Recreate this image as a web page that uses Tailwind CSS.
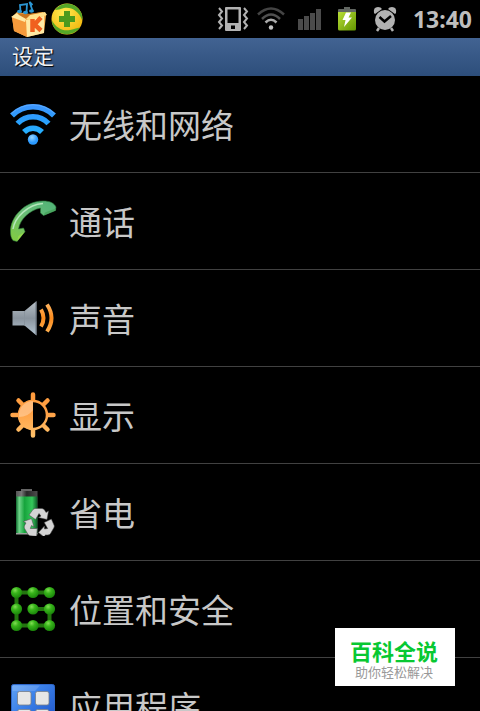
<!DOCTYPE html>
<html lang="zh-CN">
<head>
<meta charset="utf-8">
<meta name="viewport" content="width=device-width, initial-scale=1">
<title>设定</title>
<script src="https://cdn.jsdelivr.net/npm/@tailwindcss/browser@4"></script>
</head>
<body class="relative h-screen overflow-hidden bg-black font-['Noto_Sans','Noto_Sans_CJK_SC',sans-serif] text-[#c8c8c8]">

<!-- Status bar -->
<div class="flex h-[38px] items-center justify-between pr-2 pl-[10px]">
  <div class="flex items-center gap-[3px]">
    <svg class="h-[38px] w-[38px]" viewBox="0 0 38 38" aria-hidden="true">
      <path d="M2 17 7 12 20 14 33 12 36 15 34 33 17 37 4 31Z" fill="#f9b04c"/>
      <path d="M2 17 16 20 17 37 4 31Z" fill="#f59a3c"/>
      <path d="M16 20 34 16 34 33 17 37Z" fill="#ffeaa6"/>
      <path d="M7 13 18 14 33 12 16 19 5 16Z" fill="#c9731c"/>
      <path d="M1 17 7 13 9 15 16 19 15 22Z" fill="#ffe9a4"/>
      <path d="M16 19 20 15 35 12 37 15 20 20Z" fill="#ffe08a"/>
      <path d="M22.500 19V32M31 17.500 24.500 24.500 31 30.500" fill="none" stroke="#f0601f" stroke-width="4.500"/>
      <path d="M10.500 11.500 10 5 17 4 16.500 12M22.500 10.500 19.500 2 22.500 5" fill="none" stroke="#2b96d3" stroke-width="1.800"/>
      <g fill="#2b96d3"><ellipse cx="9.500" cy="11.500" rx="2.500" ry="1.800"/><ellipse cx="15.500" cy="12.500" rx="2.500" ry="1.800"/><ellipse cx="21.500" cy="11" rx="2.500" ry="1.800"/></g>
    </svg>
    <svg class="h-8 w-8" viewBox="0 0 32 32" aria-hidden="true">
      <defs>
        <radialGradient id="orb" cx=".4" cy=".3" r=".75"><stop offset="0" stop-color="#ffec50"/><stop offset="1" stop-color="#f2b50c"/></radialGradient>
      </defs>
      <circle cx="16" cy="16" r="15.500" fill="url(#orb)"/>
      <path d="M4 7C9 0 19-1 25 3.500 30 7.500 32 12 31 17 28 8 20 3.500 13 5 9 6 7 7 4 7Z" fill="#55a728"/>
      <path d="M29 24.500C24 32 13 33 7 28.500 3 25.500 1 22 1 17.500 5 25 12 28.500 19 27 24 26 26 25 29 24.500Z" fill="#55a728"/>
      <path d="M13 8H19V13H24V19H19V24H13V19H8V13H13Z" fill="#4c9a1d"/>
    </svg>
  </div>
  <div class="flex items-center">
    <svg class="mr-2 h-6 w-8" viewBox="0 0 32 24" role="img" aria-label="振动">
      <path fill-rule="evenodd" d="M9 0H23Q24 0 24 1V23Q24 24 23 24H9Q8 24 8 23V1Q8 0 9 0ZM10.500 2.500V16H21.500V2.500ZM14 18.500V22H18V18.500Z" fill="#b2b2b2"/>
      <path d="M2 1 5 4.500 2 8 5 11.500 2 15 5 18.500 2 22M27 1 30 4.500 27 8 30 11.500 27 15 30 18.500 27 22" fill="none" stroke="#b2b2b2" stroke-width="2"/>
    </svg>
    <svg class="mr-3 h-6 w-7" viewBox="0 0 28 24" role="img" aria-label="无线网络">
      <g fill="none" stroke-width="2.500">
        <path d="M1 7.500Q14-4.500 27 7.500" stroke="#444"/>
        <path d="M5 12Q14 3 23 12" stroke="#505050"/>
        <path d="M8.500 15.500Q14 10 19.500 15.500" stroke="#aaa"/>
      </g>
      <circle cx="14" cy="20.500" r="2.200" fill="#c4c4c4"/>
    </svg>
    <svg class="mr-4 h-6 w-6" viewBox="0 0 24 24" fill="#4b4b4b" role="img" aria-label="信号">
      <path d="M1 12H6V23H1ZM7 9H12V23H7ZM13 6H18V23H13ZM19 2H24V23H19Z"/>
    </svg>
    <svg class="mr-4 h-6 w-5" viewBox="0 0 20 24" role="img" aria-label="正在充电">
      <defs><linearGradient id="charge" x2="1" y2="1"><stop stop-color="#b8dd37"/><stop offset="1" stop-color="#629500"/></linearGradient></defs>
      <path d="M7 0H13V2H18Q19 2 19 3V5H1V3Q1 2 2 2H7Z" fill="#626762"/>
      <path d="M1 5H19V22Q19 23.500 17.500 23.500H2.500Q1 23.500 1 22Z" fill="url(#charge)"/>
      <path d="M9 5.500H14L11.500 10.500H15L7 20 8.500 13H5.500Z" fill="#fff"/>
    </svg>
    <svg class="mr-4 h-[26px] w-6" viewBox="0 0 24 26" role="img" aria-label="闹钟">
      <g fill="#b2b2b2"><circle cx="12" cy="14" r="10"/><path d="M1 7Q0 1 5 1 8 1 9 3L2 8ZM23 7Q24 1 19 1 16 1 15 3L22 8Z"/></g>
      <path d="M6 22 4 25M18 22 20 25" stroke="#b2b2b2" stroke-width="2.500"/>
      <path d="M6.500 11 11.500 15.500 18 10" fill="none" stroke="#000" stroke-width="2.500"/>
    </svg>
    <time class="text-[23px] leading-8 font-bold text-[#bebebe]">13:40</time>
  </div>
</div>

<!-- Title -->
<header class="flex h-[38px] items-center bg-linear-to-b from-[#426392] to-[#2d4e7b] px-3 pb-0.5">
  <h1 class="text-[21px] leading-7 text-[#f2f2f2] text-shadow-[1px_1px_1px_#000]">设定</h1>
</header>

<!-- Settings list -->
<nav aria-label="设定">
  <ul class="divide-y divide-[#414141] text-[33px] leading-[48px]">
    <li><a href="#network" class="flex h-24 items-center gap-3 px-[9px]">
      <svg class="h-12 w-12 shrink-0" viewBox="0 0 48 48" aria-hidden="true">
        <defs>
          <linearGradient id="wave" gradientUnits="userSpaceOnUse" x1="0" y1="4" x2="0" y2="34"><stop stop-color="#3f95ff"/><stop offset=".5" stop-color="#2b9dfc"/><stop offset="1" stop-color="#25b1ff"/></linearGradient>
          <radialGradient id="wdot" cx=".4" cy=".3"><stop stop-color="#9bd7ff"/><stop offset="1" stop-color="#2b9aff"/></radialGradient>
        </defs>
        <g fill="none" stroke="url(#wave)" stroke-width="5.500">
          <path d="M3 15.500A29.500 29.500 0 0 1 45 15.500"/>
          <path d="M8.500 23.500A21 21 0 0 1 39.500 23.500"/>
          <path d="M15 32A12.500 12.500 0 0 1 33 32"/>
        </g>
        <path d="M2.500 13.500A31 31 0 0 1 45.500 13.500" fill="none" stroke="#5aabff" stroke-width="1"/>
        <circle cx="24" cy="39.500" r="5.200" fill="url(#wdot)"/>
      </svg>
      <span class="pt-1">无线和网络</span></a></li>
    <li><a href="#call" class="flex h-24 items-center gap-3 px-[9px]">
      <svg class="h-12 w-12 shrink-0" viewBox="0 0 48 48" aria-hidden="true">
        <defs><linearGradient id="phone" x1="1" x2="0" y2="1"><stop stop-color="#4fb277"/><stop offset=".5" stop-color="#69bd77"/><stop offset="1" stop-color="#83cc3e"/></linearGradient></defs>
        <path d="M1.500 35C1 20 16 4 34 4 41 4 45 6 47 10L46.500 13.500 34.500 18.500 31.500 16 31.500 11C21 13 11 22 9.500 32L14.500 31 16 34.500 8 44.500 4 43.500C2 41 1.500 38 1.500 35Z" fill="url(#phone)" stroke="#2f7d3c" stroke-width=".6"/>
        <path d="M4 32C6 20 19 7.500 34 6.500" fill="none" stroke="#b5e6bb" stroke-width="1.500"/>
        <path d="M34.500 18.500 36 15.500 46.500 11.500 46.500 13.500Z" fill="#4aa660"/>
        <path d="M8 44.500 9.500 39 16 34.500Z" fill="#97d84a"/>
      </svg>
      <span class="pt-1">通话</span></a></li>
    <li><a href="#sound" class="flex h-24 items-center gap-3 px-[9px]">
      <svg class="h-12 w-12 shrink-0" viewBox="0 0 48 48" aria-hidden="true">
        <defs>
          <linearGradient id="cone" x2="0" y2="1"><stop stop-color="#b8c1c8"/><stop offset=".5" stop-color="#8a949e"/><stop offset="1" stop-color="#b4c5d2"/></linearGradient>
          <linearGradient id="amber" gradientUnits="userSpaceOnUse" x1="0" y1="8" x2="0" y2="40"><stop stop-color="#ffb968"/><stop offset=".5" stop-color="#fb8b1e"/><stop offset="1" stop-color="#ffb454"/></linearGradient>
        </defs>
        <path d="M3.500 17H15.500L27.500 7V41.500L15.500 31.500H3.500Z" fill="url(#cone)"/>
        <path d="M15.500 17V31.500" stroke="#89949e" stroke-width="1"/>
        <path d="M27 8V41" stroke="#69737e" stroke-width="1"/>
        <g fill="none" stroke="url(#amber)" stroke-width="4"><path d="M32 15.500Q37 24 32 32.500"/><path d="M38 10.500Q47 24 38 37.500"/></g>
      </svg>
      <span class="pt-1">声音</span></a></li>
    <li><a href="#display" class="flex h-24 items-center gap-3 px-[9px]">
      <svg class="h-12 w-12 shrink-0" viewBox="0 0 48 48" aria-hidden="true">
        <defs><linearGradient id="sun" gradientUnits="userSpaceOnUse" x1="0" y1="1" x2="0" y2="47"><stop stop-color="#ff9b3c"/><stop offset=".45" stop-color="#ffa146"/><stop offset="1" stop-color="#ffc36c"/></linearGradient></defs>
        <g fill="none" stroke="url(#sun)" stroke-width="4.500" stroke-linecap="round">
          <path d="M24.010 3.500 24 9M24.010 39 24 44.500M3.500 24.010 9 24M39 24.010 44.500 24M9.500 9.500 13.500 13.500M34.500 34.500 38.500 38.500M9.500 38.500 13.500 34.500M34.500 13.500 38.500 9.500"/>
        </g>
        <circle cx="24" cy="24" r="14" fill="#000" stroke="url(#sun)" stroke-width="2.500"/>
        <path d="M24 9A15 15 0 0 0 24 39Z" fill="url(#sun)"/>
        <path d="M24 10A14 14 0 0 0 10 26Q19 26 24 19Z" fill="#fff" opacity=".3"/>
      </svg>
      <span class="pt-1">显示</span></a></li>
    <li><a href="#power" class="flex h-24 items-center gap-3 px-[9px]">
      <svg class="h-12 w-12 shrink-0" viewBox="0 0 48 48" aria-hidden="true">
        <defs>
          <linearGradient id="cell"><stop stop-color="#0f6a2e"/><stop offset=".15" stop-color="#70d68a"/><stop offset=".4" stop-color="#16a43c"/><stop offset=".75" stop-color="#35c75b"/><stop offset="1" stop-color="#0c5525"/></linearGradient>
          <linearGradient id="lid"><stop stop-color="#555"/><stop offset=".25" stop-color="#777"/><stop offset=".5" stop-color="#282828"/><stop offset="1" stop-color="#4c4c4c"/></linearGradient>
        </defs>
        <path d="M12 1H23V4H12Z" fill="#666"/>
        <path d="M7 3H28.500V46H7Z" fill="url(#lid)"/>
        <path d="M7 8.500H28.500V45H7Z" fill="url(#cell)"/>
        <path d="M7 45H28.500V46.500H7Z" fill="#9aa39c"/>
        <g fill="#d4d4d4" stroke="#444" stroke-width=".5">
          <path d="M20 27 24 21.500Q25 20.500 26.500 20.500H33Q34.500 20.500 35.500 22L37 24.500 39.500 23 38 31.500 29.500 29.500 32 28 30 25.500 26.500 31.500Z"/>
          <path d="M20 27 24 21.500Q25 20.500 26.500 20.500H33Q34.500 20.500 35.500 22L37 24.500 39.500 23 38 31.500 29.500 29.500 32 28 30 25.500 26.500 31.500Z" transform="rotate(120 30 35.500)"/>
          <path d="M20 27 24 21.500Q25 20.500 26.500 20.500H33Q34.500 20.500 35.500 22L37 24.500 39.500 23 38 31.500 29.500 29.500 32 28 30 25.500 26.500 31.500Z" transform="rotate(240 30 35.500)"/>
        </g>
      </svg>
      <span class="pt-1">省电</span></a></li>
    <li><a href="#security" class="flex h-24 items-center gap-3 px-[9px]">
      <svg class="h-12 w-12 shrink-0" viewBox="0 0 48 48" aria-hidden="true">
        <defs><radialGradient id="node" cx=".38" cy=".3" r=".7"><stop stop-color="#83dd55"/><stop offset=".4" stop-color="#38b51b"/><stop offset="1" stop-color="#1a860a"/></radialGradient></defs>
        <path d="M40.500 7.500H7.500V40.500H40.500V24H24" fill="none" stroke="#23760f" stroke-width="4"/>
        <g fill="url(#node)">
          <circle cx="7.500" cy="7.500" r="5.600"/><circle cx="24" cy="7.500" r="5.600"/><circle cx="40.500" cy="7.500" r="5.600"/>
          <circle cx="7.500" cy="24" r="5.600"/><circle cx="24" cy="24" r="5.600"/><circle cx="40.500" cy="24" r="5.600"/>
          <circle cx="7.500" cy="40.500" r="5.600"/><circle cx="24" cy="40.500" r="5.600"/><circle cx="40.500" cy="40.500" r="5.600"/>
        </g>
      </svg>
      <span class="pt-1">位置和安全</span></a></li>
    <li><a href="#apps" class="flex h-24 items-center gap-3 px-[9px]">
      <svg class="h-12 w-12 shrink-0" viewBox="0 0 48 48" aria-hidden="true">
        <defs>
          <linearGradient id="tile" x2="1" y2="1"><stop stop-color="#5fa2f5"/><stop offset=".4" stop-color="#3a7fe8"/><stop offset="1" stop-color="#1c4fc4"/></linearGradient>
        </defs>
        <rect x="2.500" y="2.500" width="43" height="43" rx="2" fill="url(#tile)" stroke="#2e66c8"/>
        <path d="M3.500 3.500H31L26 9H3.500Z" fill="#fff" opacity=".15"/>
        <g fill="#e6e6e6" stroke="#777d88" stroke-width=".8"><rect x="8.500" y="9.500" width="13.500" height="13.500" rx="2"/><rect x="26.500" y="9.500" width="13.500" height="13.500" rx="2"/><rect x="8.500" y="27.500" width="13.500" height="13.500" rx="2"/><rect x="26.500" y="27.500" width="13.500" height="13.500" rx="2"/></g>
      </svg>
      <span class="pt-1">应用程序</span></a></li>
  </ul>
</nav>

<!-- Floating badge -->
<aside class="absolute right-[25px] bottom-[25px] flex h-[58px] w-[120px] flex-col items-center bg-white pt-[10px] pr-0.5 font-['Noto_Sans_CJK_SC',sans-serif]">
  <strong class="text-[22px] leading-6 font-bold text-[#08c832]">百科全说</strong>
  <span class="text-[13px] leading-5 text-[#999]">助你轻松解决</span>
</aside>
</body>
</html>
